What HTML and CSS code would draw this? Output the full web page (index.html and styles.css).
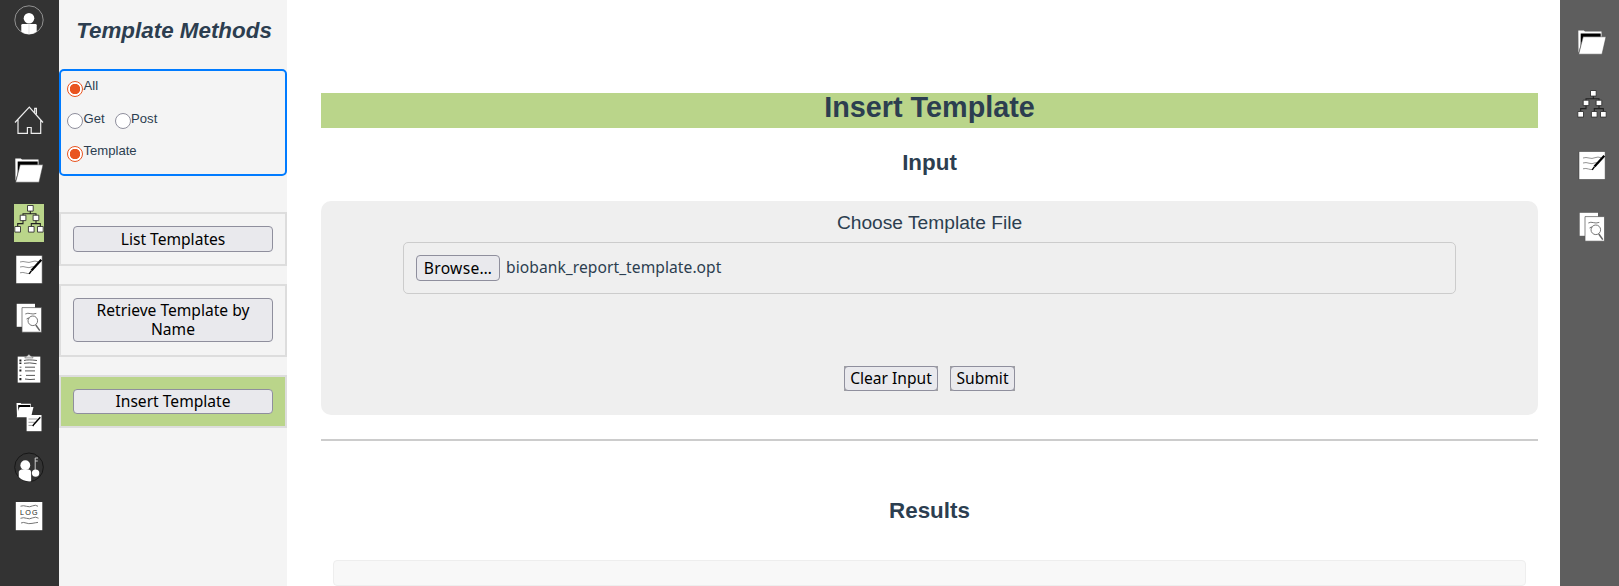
FILE: index.html
```html
<!DOCTYPE html>
<html lang="en">
<head>
<meta charset="utf-8">
<title>Insert Template</title>
<link rel="stylesheet" href="styles.css">
</head>
<body>
<svg class="defs" width="0" height="0">
  <symbol id="folder" viewBox="0 0 30 38">
    <path d="M1.3 3.5h5.5l1.2 1h16.5v8H5L1.5 26z" fill="#fff"/>
    <path d="M3.7 6.4h20v5H6L3.7 18z" fill="#000"/>
    <path d="M6.2 9.8H29L25 27.2H1.7z" fill="#fff" stroke="#444" stroke-width=".5"/>
  </symbol>
  <symbol id="tree" viewBox="0 0 30 38">
    <path d="M16.3 7v2.7M9 12V9.700h13V12M9 16v3.600H3.700V23M22 16v3.600M17.300 23v-3.400h9V23" fill="none" stroke="#222" stroke-width="1.1"/>
    <g fill="#fff" stroke="#333" stroke-width=".9">
      <path d="M13.5 1.5h5.7v5.6h-5.7zM6.2 11.2h5.7v5.4H6.2zM19.1 11.2h5.7v5.4h-5.7zM.8 22.5h5.7v5.6H.8zM14.4 22.5h5.7v5.6h-5.7zM23.5 22.5h5.7v5.6h-5.7z"/>
    </g>
  </symbol>
  <symbol id="edit" viewBox="0 0 30 38">
    <path d="M2 1.500h26.200v28H2z" fill="#fff" stroke="#333" stroke-width=".5"/>
    <path d="M6 8q3-1 6 0t6-.3 6 0M6 13q3-1 6 .2t6-.4l4 .2M6 18.8q3-.8 5.500.2t4.500.3" fill="none" stroke="#777" stroke-width=".8"/>
    <path d="M27.3 5.8 17.5 16.6" stroke="#000" stroke-width="2.3"/><path d="m17.500 16.600-2.300 3.200" stroke="#000" stroke-width="1.400"/>
  </symbol>
  <symbol id="search" viewBox="0 0 30 38">
    <path d="M2.700.8H21v23H2.700z" fill="#fff"/>
    <path d="M8 4.600h19.500v24.600H8z" fill="#fff" stroke="#555" stroke-width=".7"/>
    <path d="M11.300 11q2.500-1.300 5-.4t6-.2M12.500 16q1.500-1.200 3-1" fill="none" stroke="#555" stroke-width=".8"/>
    <circle cx="18.8" cy="17.8" r="4.8" fill="none" stroke="#777" stroke-width="1"/>
    <path d="m21.800 22 4 5.600" stroke="#666" stroke-width="1.500"/>
  </symbol>
</svg>
<div class="app">
  <nav class="rail rail-main">
    <svg class="icon avatar" viewBox="0 0 30 30">
      <circle cx="15" cy="15" r="14.2" fill="none" stroke="#aaa" stroke-width=".8"/>
      <circle cx="15" cy="13.2" r="5.3" fill="#fff"/>
      <path d="M7.3 20.2q0-1.200 1.300-1.200h12.900q1.200 0 1.200 1.200v6.600Q19 29.300 15 29.300t-7.700-2.500z" fill="#fff"/>
      <path d="M15 19v10" stroke="#ccc" stroke-width=".6"/>
    </svg>
    <svg class="icon" viewBox="0 0 30 38">
      <path d="M1 17.5 15.3 2.2 29 17.5M4 14.800v13.500h9.400v-5.800h3.800v5.800h9.500V14.800M20.700 7.500V3.300h1.700v6" fill="none" stroke="#eee" stroke-width="1.2"/>
    </svg>
    <svg class="icon"><use href="#folder"/></svg>
    <svg class="icon icon-active"><use href="#tree"/></svg>
    <svg class="icon"><use href="#edit"/></svg>
    <svg class="icon"><use href="#search"/></svg>
    <svg class="icon" viewBox="0 0 30 38">
      <path d="M3.7 3.6h22.6v26H3.7z" fill="#fff"/>
      <path d="M10.800 5q.3-2 2.500-2 .6-1.500 1.600-1.500t1.600 1.500q2.200 0 2.600 2z" fill="#ddd" stroke="#555" stroke-width=".5"/>
      <path d="M5.400 6.500h2v2h-2zM5.400 9.600h2v1.400h-2zM5.400 16.600h2v2h-2zM5.400 25h2v2.200h-2z" fill="#222"/>
      <path d="M10 7.500q4-1.200 13 0M10 10.300q5-1 12.500.4M11 14.200h10M11 17.900h10M12 22.400h9M11 26q5 1 10 .2M5.600 14.200h1.800M5.600 22.400h1.800" fill="none" stroke="#444" stroke-width=".9"/>
    </svg>
    <svg class="icon" viewBox="0 0 30 38">
      <path d="M2.500.9h4l.8.8h9.500v4L3 14.500z" fill="#fff"/>
      <path d="M4.200 3h12v3H5l-.8 4z" fill="#000"/>
      <path d="M5.500 4.900h14L17 15.200H2.700z" fill="#fff"/>
      <path d="M12.600 13h14.900v16.200H12.600z" fill="#fff"/>
      <path d="M14.500 17h9M14.500 20.300h7M14.500 23.400h5" stroke="#777" stroke-width=".7"/>
      <path d="m26.300 15.300-6.500 7.200-1 1.600" fill="none" stroke="#000" stroke-width="1.4"/>
    </svg>
    <svg class="icon" viewBox="0 0 30 38">
      <circle cx="15" cy="15.3" r="14.3" fill="none" stroke="#171717" stroke-width="1"/>
      <circle cx="11.3" cy="13.2" r="4.9" fill="#fff"/>
      <path d="M4.800 19.800q.5-2 2.700-2.300h7.200q2.300.3 2.400 2.500v9.300Q9.500 30 4.800 25z" fill="#fff"/>
      <circle cx="21.6" cy="21.1" r="3.7" fill="#fff"/>
      <path d="M21.200 18V6h2.800M21.200 9h2.600" fill="none" stroke="#ddd" stroke-width=".9"/>
    </svg>
    <svg class="icon" viewBox="0 0 30 38">
      <path d="M1.800 1h26.500v28.200H1.800z" fill="#fff"/>
      <path d="M6.500 5.200q3-1 6 .1t6-.4 5.500.4M6.500 17.300q3-1.200 6 0t6-.4 6 .3M7 22q2.500-1.100 5 0t6 .4 6-1" fill="none" stroke="#666" stroke-width=".9"/>
      <text class="log-label" x="6" y="14">LOG</text>
    </svg>
  </nav>

  <aside class="panel">
    <h2 class="panel-title">Template Methods</h2>
    <div class="filters">
      <div class="filter-row"><i class="radio checked"></i><span>All</span></div>
      <div class="filter-row"><i class="radio"></i><span>Get</span><i class="radio radio-next"></i><span>Post</span></div>
      <div class="filter-row"><i class="radio checked"></i><span>Template</span></div>
    </div>
    <div class="methods">
      <div class="method"><button class="btn wide">List Templates</button></div>
      <div class="method tall"><button class="btn wide">Retrieve Template by Name</button></div>
      <div class="method selected"><button class="btn wide">Insert Template</button></div>
    </div>
  </aside>

  <main class="main">
    <h1 class="banner">Insert Template</h1>
    <h2 class="section-title">Input</h2>
    <section class="card">
      <div class="card-label">Choose Template File</div>
      <div class="file-box"><button class="btn browse">Browse…</button><span class="file-name">biobank_report_template.opt</span></div>
      <div class="actions">
        <span class="action"><button class="btn clear">Clear Input</button></span>
        <span class="action"><button class="btn submit">Submit</button></span>
      </div>
    </section>
    <hr class="rule">
    <h2 class="section-title results-title">Results</h2>
    <div class="results"></div>
  </main>

  <nav class="rail rail-side">
    <svg class="icon"><use href="#folder"/></svg>
    <svg class="icon"><use href="#tree"/></svg>
    <svg class="icon"><use href="#edit"/></svg>
    <svg class="icon"><use href="#search"/></svg>
  </nav>
</div>
</body>
</html>
```
FILE: styles.css
```css
* { box-sizing: border-box; }
body {
  margin: 0;
  overflow: hidden;
  color: #2c3e50;
  background: #fff;
  font-family: "Liberation Sans", Arial, sans-serif;
}
h1, h2 { margin: 0; }
.defs { display: block; }
.app { display: flex; height: 586px; }

.rail { display: flex; flex-direction: column; flex: none; width: 59px; }
.rail-main { padding: 5px 0 0 14px; background: #333; gap: 11.5px; }
.rail-side { padding: 27px 0 0 17px; background: #5e5e5e; gap: 23.5px; }
.icon { display: block; flex: none; width: 30px; height: 38px; }
.avatar { height: 30px; margin-bottom: 58.5px; }
.icon-active { background: #bad58a; }
.log-label { font: 7.2px "Liberation Sans", sans-serif; letter-spacing: 1.2px; fill: #222; }

.panel { flex: none; width: 228px; background: #f4f4f4; }
.panel-title {
  height: 69px;
  padding: 18px 0 0 2px;
  font-size: 22.4px;
  line-height: 26px;
  font-style: italic;
  text-align: center;
}
.filters {
  height: 107px;
  padding: 7px 6px;
  border: 2px solid #007bff;
  border-radius: 5px;
}
.filter-row { display: flex; height: 32.5px; font-size: 13.1px; line-height: 15px; }
.radio {
  width: 16px;
  height: 16px;
  margin: 2.9px 0.5px 0 0;
  border: 1px solid #8f8f9d;
  border-radius: 50%;
  background: #fff;
}
.radio-next { margin-left: 10px; }
.radio.checked { border-color: #e95420; background: radial-gradient(circle, #e95420 4.9px, #fff 5.5px); }
.methods { display: flex; flex-direction: column; gap: 18px; padding-top: 36px; }
.method { height: 54px; padding: 12px; border: 2px solid #ddd; }
.tall { height: 73px; }
.selected { background: #bad58a; height: 53px; }

.btn {
  display: block;
  flex: none;
  height: 26px;
  padding: 0;
  border: 1px solid #8f8f9d;
  border-radius: 4px;
  background: #e9e9ed;
  color: #000;
  font: 15.6px/19px "Noto Sans", sans-serif;
  white-space: nowrap;
}
.wide { width: 200px; white-space: normal; padding: 0 8px; }
.tall .btn { height: 44px; }
.selected .btn { height: 25px; }

.main { flex: 1; padding: 93px 22px 0 34px; }
.banner {
  height: 35px;
  background: #bad58a;
  font-size: 28.8px;
  line-height: 28px;
  text-align: center;
}
.section-title { height: 73px; padding-top: 22px; font-size: 22.4px; line-height: 26px; text-align: center; }
.card { height: 214px; padding-top: 10px; border-radius: 10px; background: #efefef; }
.card-label { height: 31px; font-size: 19.2px; line-height: 23px; text-align: center; }
.file-box {
  display: flex;
  height: 52px;
  margin: 0 82px;
  padding: 12px;
  border: 1px solid #ccc;
  border-radius: 5px;
}
.browse { width: 84px; letter-spacing: 0.3px; }
.file-name { margin-left: 6px; font: 15.6px/25px "Noto Sans", sans-serif; letter-spacing: 0.06px; }
.actions { display: flex; justify-content: center; gap: 12px; padding: 72px 0 0; }
.action { background: #a0a0a4; }
.action .btn { height: 25px; }
.clear { width: 94px; }
.submit { width: 65px; }
.rule { height: 2px; margin: 24px 0 0; border: 0; background: #ccc; }
.results-title { height: 119px; padding-top: 57px; }
.results { height: 26px; margin: 0 12px; border: 1px solid #eee; border-radius: 4px; background: #f8f8f8; }
```
